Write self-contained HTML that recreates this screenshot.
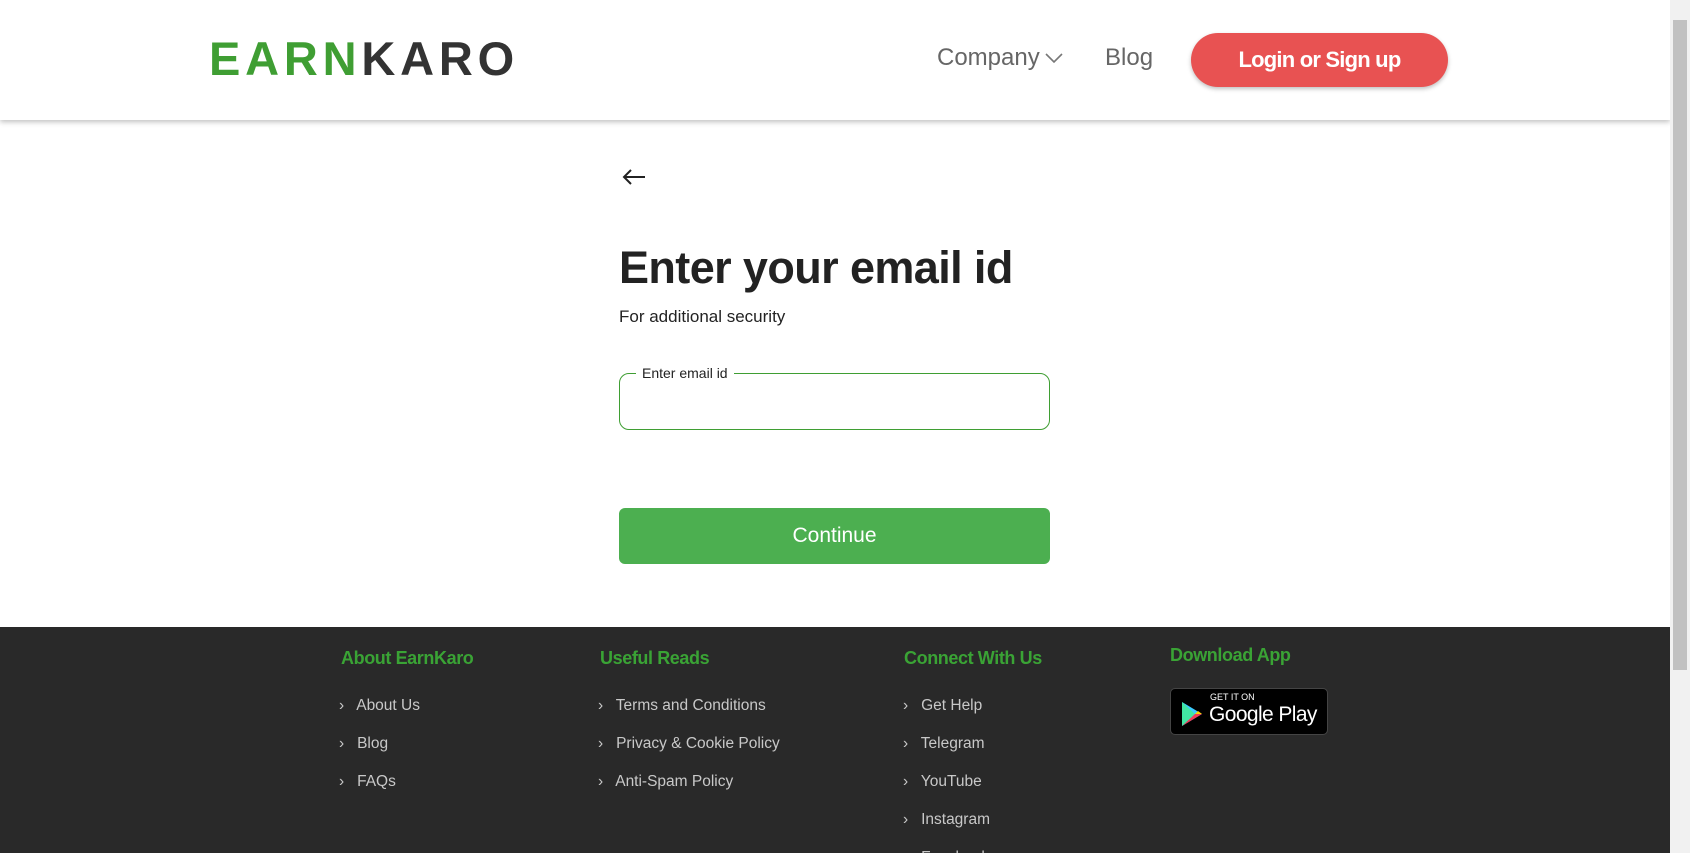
<!DOCTYPE html>
<html><head><meta charset="utf-8"><style>
*{margin:0;padding:0;box-sizing:border-box}
html,body{width:1690px;height:853px;overflow:hidden}
body{background:#fff;font-family:"Liberation Sans",sans-serif}
#w{position:relative;width:1690px;height:853px;overflow:hidden}
.a{position:absolute;white-space:nowrap}
header{position:absolute;left:0;top:0;width:1670px;height:120px;background:#fff;box-shadow:0 2px 5px rgba(0,0,0,.25)}
.logo{left:209px;top:34px;font-size:47px;font-weight:bold;letter-spacing:4.8px;line-height:50px}
.nav{font-size:24px;color:#666;top:44px}
.btn{left:1191px;top:33px;width:257px;height:54px;border-radius:27px;background:#e85252;color:#fff;font-weight:bold;font-size:22px;text-align:center;line-height:54px;letter-spacing:-.8px;box-shadow:0 2px 4px rgba(0,0,0,.25)}
footer{position:absolute;left:0;top:627px;width:1670px;height:226px;background:#292929}
.fh{color:#3aa335;font-size:18px;font-weight:bold;letter-spacing:-.4px}
.li{color:#c8c8c8;font-size:15.5px}
.sb{position:absolute;left:1670px;top:0;width:20px;height:853px;background:#f1f1f1}
</style></head><body><div id="w">
<header>
<div class="a logo"><span style="color:#3f9e33">EARN</span><span style="color:#333">KARO</span></div>
<div class="a nav" style="left:937px">Company</div>
<svg class="a" style="left:1045px;top:52px" width="18" height="12" viewBox="0 0 18 12"><path d="M1 2l8 8 8-8" fill="none" stroke="#777" stroke-width="1.6"/></svg>
<div class="a nav" style="left:1105px">Blog</div>
<div class="a btn">Login or Sign up</div>
</header>
<svg class="a" style="left:621px;top:168px" width="26" height="18" viewBox="0 0 26 18"><path d="M24 9H3M10 2L3 9l7 7" fill="none" stroke="#222" stroke-width="2"/></svg>
<div class="a" style="left:619px;top:242px;font-size:45px;font-weight:bold;color:#222;letter-spacing:-.6px">Enter your email id</div>
<div class="a" style="left:619px;top:307px;font-size:17px;color:#222">For additional security</div>
<div class="a" style="left:619px;top:373px;width:431px;height:57px;border:1px solid #3f9e33;border-radius:10px"></div>
<div class="a" style="left:636px;top:365px;background:#fff;padding:0 6px;font-size:14px;color:#222">Enter email id</div>
<div class="a" style="left:619px;top:508px;width:431px;height:56px;border-radius:6px;background:#4caf50;color:#fff;font-size:21px;text-align:center;line-height:56px">Continue</div>
<footer></footer>
<div class="a fh" style="left:341px;top:648px">About EarnKaro</div>
<div class="a fh" style="left:600px;top:648px">Useful Reads</div>
<div class="a fh" style="left:904px;top:648px">Connect With Us</div>
<div class="a fh" style="left:1170px;top:645px">Download App</div>
<div class="a li" style="left:339px;top:687px;line-height:38px">›&nbsp;&nbsp; About Us<br>›&nbsp;&nbsp; Blog<br>›&nbsp;&nbsp; FAQs</div>
<div class="a li" style="left:598px;top:687px;line-height:38px">›&nbsp;&nbsp; Terms and Conditions<br>›&nbsp;&nbsp; Privacy &amp; Cookie Policy<br>›&nbsp;&nbsp; Anti-Spam Policy</div>
<div class="a li" style="left:903px;top:687px;line-height:38px">›&nbsp;&nbsp; Get Help<br>›&nbsp;&nbsp; Telegram<br>›&nbsp;&nbsp; YouTube<br>›&nbsp;&nbsp; Instagram<br>›&nbsp;&nbsp; Facebook</div>
<div class="a" style="left:1170px;top:688px;width:158px;height:47px;background:#000;border-radius:5px;border:1px solid #444"></div>
<svg class="a" style="left:1180px;top:700px" width="24" height="28" viewBox="0 0 24 28"><path d="M2 2l20 12L2 26z" fill="#3bccff"/><path d="M2 2l13 12L2 26z" fill="#48ff48" opacity=".5"/><path d="M2 26l13-12 7 0z" fill="#f33a55"/><path d="M15 14l7 0-4-3z" fill="#ffd400"/></svg>
<div class="a" style="left:1210px;top:692px;color:#fff;font-size:9px">GET IT ON</div>
<div class="a" style="left:1209px;top:703px;color:#fff;font-size:21px;letter-spacing:-.6px">Google Play</div>
<div class="sb"><div style="position:absolute;left:3px;top:20px;width:14px;height:650px;background:#c1c1c1"></div></div>
</div></body></html>
